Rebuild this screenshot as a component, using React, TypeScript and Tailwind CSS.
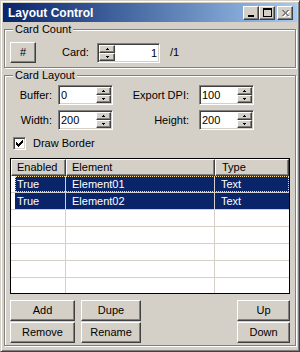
const raised =
  "border border-t-white border-l-white border-r-[#404040] border-b-[#404040] shadow-[inset_-1px_-1px_#808080] bg-[#d4d0c8]";
const sunken =
  "border border-t-[#808080] border-l-[#808080] border-r-white border-b-white shadow-[inset_1px_1px_#404040,inset_-1px_-1px_#d4d0c8] bg-white";

interface Row {
  enabled: string;
  element: string;
  type: string;
}

const ROWS: Row[] = [
  { enabled: "True", element: "Element01", type: "Text" },
  { enabled: "True", element: "Element02", type: "Text" },
];

function Arrow({ up }: { up?: boolean }) {
  return (
    <svg width="3" height="2" viewBox="0 0 3 2" shapeRendering="crispEdges">
      {up ? (
        <>
          <rect x="1" y="0" width="1" height="1" fill="#000" />
          <rect x="0" y="1" width="3" height="1" fill="#000" />
        </>
      ) : (
        <>
          <rect x="0" y="0" width="3" height="1" fill="#000" />
          <rect x="1" y="1" width="1" height="1" fill="#000" />
        </>
      )}
    </svg>
  );
}

function SpinButtons({ width }: { width: string }) {
  return (
    <div className={`flex flex-col ${width}`}>
      <div className={`h-[8px] flex items-center justify-center ${raised}`}>
        <Arrow up />
      </div>
      <div className={`h-[8px] flex items-center justify-center ${raised}`}>
        <Arrow />
      </div>
    </div>
  );
}

function NumField({ value, className }: { value: string; className: string }) {
  return (
    <div className={`w-[55px] h-[20px] flex p-[1px] ${sunken} ${className}`}>
      <span className="flex-1 pl-[1px] leading-[16px]">{value}</span>
      <SpinButtons width="w-[15px]" />
    </div>
  );
}

function PushButton({ label, className }: { label: string; className: string }) {
  return (
    <div className={`h-[21px] flex items-center justify-center ${raised} ${className}`}>
      {label}
    </div>
  );
}

function Group({
  title,
  className,
  children,
}: {
  title: string;
  className: string;
  children: React.ReactNode;
}) {
  return (
    <fieldset
      className={`mx-[1px] border border-[#808080] shadow-[inset_1px_1px_#fff,1px_1px_#fff] px-[5px] ${className}`}
    >
      <legend className="ml-[3px] px-[2px] leading-[13px] bg-[#d4d0c8]">{title}</legend>
      {children}
    </fieldset>
  );
}

function CheckMark() {
  const px: [number, number, number][] = [
    [6, 0, 1],
    [5, 1, 2],
    [0, 2, 1],
    [4, 2, 3],
    [0, 3, 2],
    [3, 3, 3],
    [0, 4, 5],
    [1, 5, 3],
    [2, 6, 1],
  ];
  return (
    <svg width="7" height="7" viewBox="0 0 7 7" shapeRendering="crispEdges">
      {px.map(([x, y, w], i) => (
        <rect key={i} x={x} y={y} width={w} height="1" fill="#000" />
      ))}
    </svg>
  );
}

function TitleButton({ children, className }: { children: React.ReactNode; className: string }) {
  return (
    <div className={`w-[16px] h-[14px] relative ${raised} ${className}`}>{children}</div>
  );
}

export default function App() {
  return (
    <div className="w-[300px] h-[352px] overflow-hidden bg-[#d4d0c8] border border-t-[#d4d0c8] border-l-[#d4d0c8] border-r-[#404040] border-b-[#404040] shadow-[inset_1px_1px_#fff,inset_-1px_-1px_#808080] p-[2px] flex flex-col font-['Liberation_Sans',Arial,sans-serif] text-[11px] text-black">
      {/* title bar */}
      <div className="h-[19px] shrink-0 flex items-center bg-linear-to-r from-[#0a246a] to-[#a6caf0] pl-[5px] pr-[4px]">
        <span className="flex-1 text-white font-bold text-[12px] leading-none">Layout Control</span>
        <TitleButton className="">
          <div className="absolute left-[4px] top-[8px] w-[6px] h-[2px] bg-black" />
        </TitleButton>
        <TitleButton className="">
          <div className="absolute left-[3px] top-[1px] w-[9px] h-[9px] border border-t-2 border-black" />
        </TitleButton>
        <TitleButton className="ml-[2px]">
          <svg
            className="absolute left-[3px] top-[2px]"
            width="10"
            height="9"
            viewBox="0 0 10 9"
            shapeRendering="crispEdges"
          >
            <path d="M1 1h2v1H1zM6 1h2v1H6zM2 2h2v1H2zM5 2h2v1H5zM3 3h3v1H3zM3 4h3v1H3zM2 5h2v1H2zM5 5h2v1H5zM1 6h2v1H1zM6 6h2v1H6z" fill="#fff" transform="translate(1 1)" />
            <path d="M1 1h2v1H1zM6 1h2v1H6zM2 2h2v1H2zM5 2h2v1H5zM3 3h3v1H3zM3 4h3v1H3zM2 5h2v1H2zM5 5h2v1H5zM1 6h2v1H1zM6 6h2v1H6z" fill="#808080" />
          </svg>
        </TitleButton>
      </div>

      {/* card count */}
      <Group title="Card Count" className="mt-[1px]">
        <div className="pt-[6px] pb-[4px] flex items-center">
          <PushButton label="#" className="w-[26px] h-[20px]" />
          <span className="ml-[26px] w-[35px]">Card:</span>
          <div className={`w-[63px] h-[20px] flex p-[1px] ${sunken}`}>
            <SpinButtons width="w-[16px]" />
            <span className="flex-1 text-right pr-[1px] leading-[16px]">1</span>
          </div>
          <span className="ml-[10px]">/1</span>
        </div>
      </Group>

      {/* card layout */}
      <Group title="Card Layout" className="mt-[1px]">
        <div className="pt-[3px] pb-[2px] flex flex-col">
          <div className="flex items-center h-[20px]">
            <span className="w-[42px] text-right">Buffer:</span>
            <NumField value="0" className="ml-[6px]" />
            <span className="w-[76px] text-right">Export DPI:</span>
            <NumField value="100" className="ml-[10px]" />
          </div>
          <div className="mt-[5px] flex items-center h-[20px]">
            <span className="w-[42px] text-right">Width:</span>
            <NumField value="200" className="ml-[6px]" />
            <span className="w-[76px] text-right">Height:</span>
            <NumField value="200" className="ml-[10px]" />
          </div>

          <div className="mt-[7px] ml-[3px] h-[13px] flex items-center">
            <div className={`w-[13px] h-[13px] flex items-center justify-center ${sunken}`}>
              <CheckMark />
            </div>
            <span className="ml-[7px]">Draw Border</span>
          </div>

          {/* element grid */}
          <div className="mt-[8px] h-[136px] border border-black bg-white flex flex-col">
            <div className="h-[17px] shrink-0 flex leading-[15px]">
              <div className={`w-[55px] pl-[5px] ${raised}`}>Enabled</div>
              <div className={`w-[149px] pl-[5px] ${raised}`}>Element</div>
              <div className={`flex-1 pl-[6px] ${raised}`}>Type</div>
            </div>
            <div className="flex-1 overflow-hidden">
              {ROWS.map((r, i) => (
                <div key={r.element} className="h-[17px] flex border-b border-[#d4d0c8]">
                  <div className="w-[4px]" />
                  <div
                    className={`flex-1 flex bg-[#0a246a] text-white leading-[16px] ${
                      i === 0 ? "outline-1 outline-dotted -outline-offset-1 outline-[#f5db95]" : ""
                    }`}
                  >
                    <div className="w-[51px] pl-[2px] border-r border-[#d4d0c8]">{r.enabled}</div>
                    <div className="w-[149px] pl-[6px] border-r border-[#d4d0c8]">{r.element}</div>
                    <div className="flex-1 pl-[6px]">{r.type}</div>
                  </div>
                </div>
              ))}
              {[0, 1, 2, 3, 4].map((k) => (
                <div key={k} className="h-[17px] flex border-b border-[#d4d0c8]">
                  <div className="w-[55px] border-r border-[#d4d0c8]" />
                  <div className="w-[149px] border-r border-[#d4d0c8]" />
                  <div className="flex-1" />
                </div>
              ))}
            </div>
          </div>

          {/* buttons */}
          <div className="mt-[6px] flex justify-between">
            <div className="flex gap-[6px]">
              <div className="flex flex-col gap-[1px]">
                <PushButton label="Add" className="w-[65px]" />
                <PushButton label="Remove" className="w-[65px]" />
              </div>
              <div className="flex flex-col gap-[1px]">
                <PushButton label="Dupe" className="w-[60px]" />
                <PushButton label="Rename" className="w-[60px]" />
              </div>
            </div>
            <div className="flex flex-col gap-[1px]">
              <PushButton label="Up" className="w-[53px]" />
              <PushButton label="Down" className="w-[53px]" />
            </div>
          </div>
        </div>
      </Group>
    </div>
  );
}
